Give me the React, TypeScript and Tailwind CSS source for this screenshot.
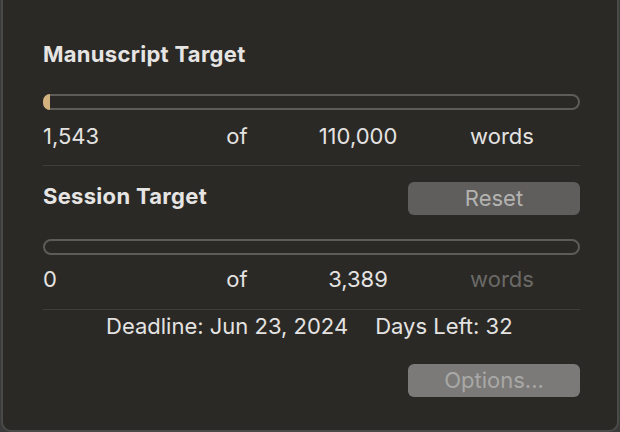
import React from "react";

function Bar({ fill }: { fill: number }) {
  return (
    <div className="relative h-[16px] w-full rounded-full border-2 border-[#5d5c59]">
      {fill > 0 && (
        <div
          className="absolute left-[-2px] top-[-2px] h-[16px] rounded-l-full bg-[#d2b27e]"
          style={{ width: `${fill}px` }}
        />
      )}
    </div>
  );
}

function CountRow({ a, b, dim }: { a: string; b: string; dim?: boolean }) {
  return (
    <div className="flex h-[24px] items-center text-[22px] leading-[24px] text-[#e4e3e1]">
      <div className="w-[160px]">{a}</div>
      <div className="w-[68px] text-center">of</div>
      <div className="w-[174px] text-center">{b}</div>
      <div className={`w-[114px] text-center ${dim ? "text-[#6a6966]" : ""}`}>words</div>
    </div>
  );
}

export default function App() {
  return (
    <div
      className="h-[432px] w-[620px] bg-[#3a3a3a]"
      style={{ fontFamily: "Inter, 'Noto Sans', sans-serif" }}
    >
      <div className="ml-[1px] h-[432px] w-[618px] rounded-b-[10px] border-x-2 border-b-2 border-[#4a4a48] bg-[#2a2926]">
        <div className="flex flex-col pl-[40px] pr-[37px]">
          <div className="pt-[41px] text-[22px] font-bold leading-[26px] tracking-[0.3px] text-[#e6e5e3]">
            Manuscript Target
          </div>
          <div className="mt-[27px]">
            <Bar fill={7} />
          </div>
          <div className="mt-[14px]">
            <CountRow a="1,543" b="110,000" />
          </div>
          <div className="mt-[17px] h-[1px] bg-[#3f3e3b]" />
          <div className="mt-[16px] flex items-start justify-between">
            <div className="mt-[1px] text-[22px] font-bold leading-[26px] tracking-[0.3px] text-[#e6e5e3]">
              Session Target
            </div>
            <div className="flex h-[33px] w-[172px] items-center justify-center rounded-[6px] bg-[#5f5e5c] text-[22px] text-[#b4b3b1]">
              Reset
            </div>
          </div>
          <div className="mt-[24px]">
            <Bar fill={0} />
          </div>
          <div className="mt-[12px]">
            <CountRow a="0" b="3,389" dim />
          </div>
          <div className="mt-[18px] h-[1px] bg-[#3f3e3b]" />
          <div className="mt-[4px] flex h-[24px] items-center gap-[27px] pl-[63px] text-[22px] leading-[24px] text-[#e4e3e1]">
            <span>Deadline: Jun 23, 2024</span>
            <span>Days Left: 32</span>
          </div>
          <div className="mt-[26px] flex justify-end">
            <div className="flex h-[33px] w-[172px] items-center justify-center rounded-[6px] bg-[#7b7a78] text-[22px] text-[#a9a8a6]">
              Options...
            </div>
          </div>
        </div>
      </div>
    </div>
  );
}
